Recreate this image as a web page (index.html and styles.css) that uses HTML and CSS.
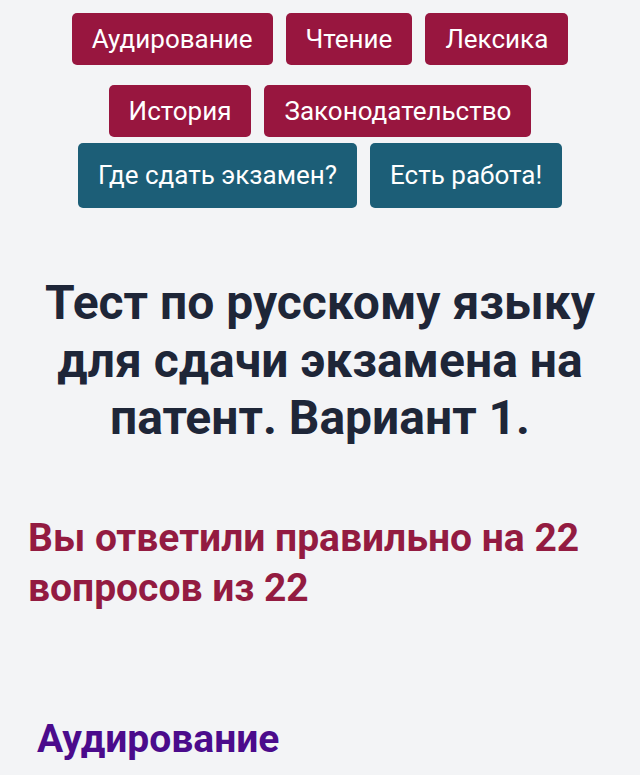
FILE: index.html
```html
<!DOCTYPE html>
<html lang="ru">
<head>
<meta charset="utf-8">
<title>Тест по русскому языку</title>
<link rel="stylesheet" href="styles.css">
</head>
<body>
<nav class="tags">
  <a class="btn btn-red" href="#">Аудирование</a>
  <a class="btn btn-red" href="#">Чтение</a>
  <a class="btn btn-red" href="#">Лексика</a>
  <a class="btn btn-red" href="#">История</a>
  <a class="btn btn-red" href="#">Законодательство</a>
</nav>
<nav class="links">
  <a class="btn btn-teal" href="#">Где сдать экзамен?</a>
  <a class="btn btn-teal" href="#">Есть работа!</a>
</nav>
<h1 class="title">Тест по русскому языку для сдачи экзамена на патент. Вариант 1.</h1>
<p class="result">Вы ответили правильно на 22 вопросов из 22</p>
<h2 class="section">Аудирование</h2>
</body>
</html>
```
FILE: styles.css
```css
html, body {
  margin: 0;
  padding: 0;
}
body {
  background: #f3f4f6;
  font-family: Roboto, "Noto Sans", sans-serif;
  color: #1f2937;
}
.tags {
  display: flex;
  flex-wrap: wrap;
  justify-content: center;
  column-gap: 13px;
  row-gap: 20px;
  padding: 13px 10px 0;
}
.links {
  display: flex;
  justify-content: center;
  gap: 13px;
  margin-top: 6px;
}
.btn {
  display: block;
  color: #ffffff;
  text-decoration: none;
  border-radius: 5px;
  padding: 0 20px;
  font-size: 26px;
  line-height: 52px;
}
.btn-red {
  background: #98163f;
}
.btn-teal {
  background: #1c5e77;
  line-height: 65px;
  padding: 0 20px;
}
.title {
  margin: 66px 0 0;
  padding: 0 20px;
  text-align: center;
  font-size: 48px;
  line-height: 57.6px;
  font-weight: 700;
  color: #1e2638;
}
.result {
  margin: 66px 0 0;
  padding: 0 28px;
  font-size: 39px;
  line-height: 50px;
  font-weight: 700;
  color: #931b41;
}
.section {
  margin: 101px 0 0;
  padding: 0 37px;
  font-size: 39px;
  line-height: 50px;
  font-weight: 700;
  color: #4b0b8c;
}
```
